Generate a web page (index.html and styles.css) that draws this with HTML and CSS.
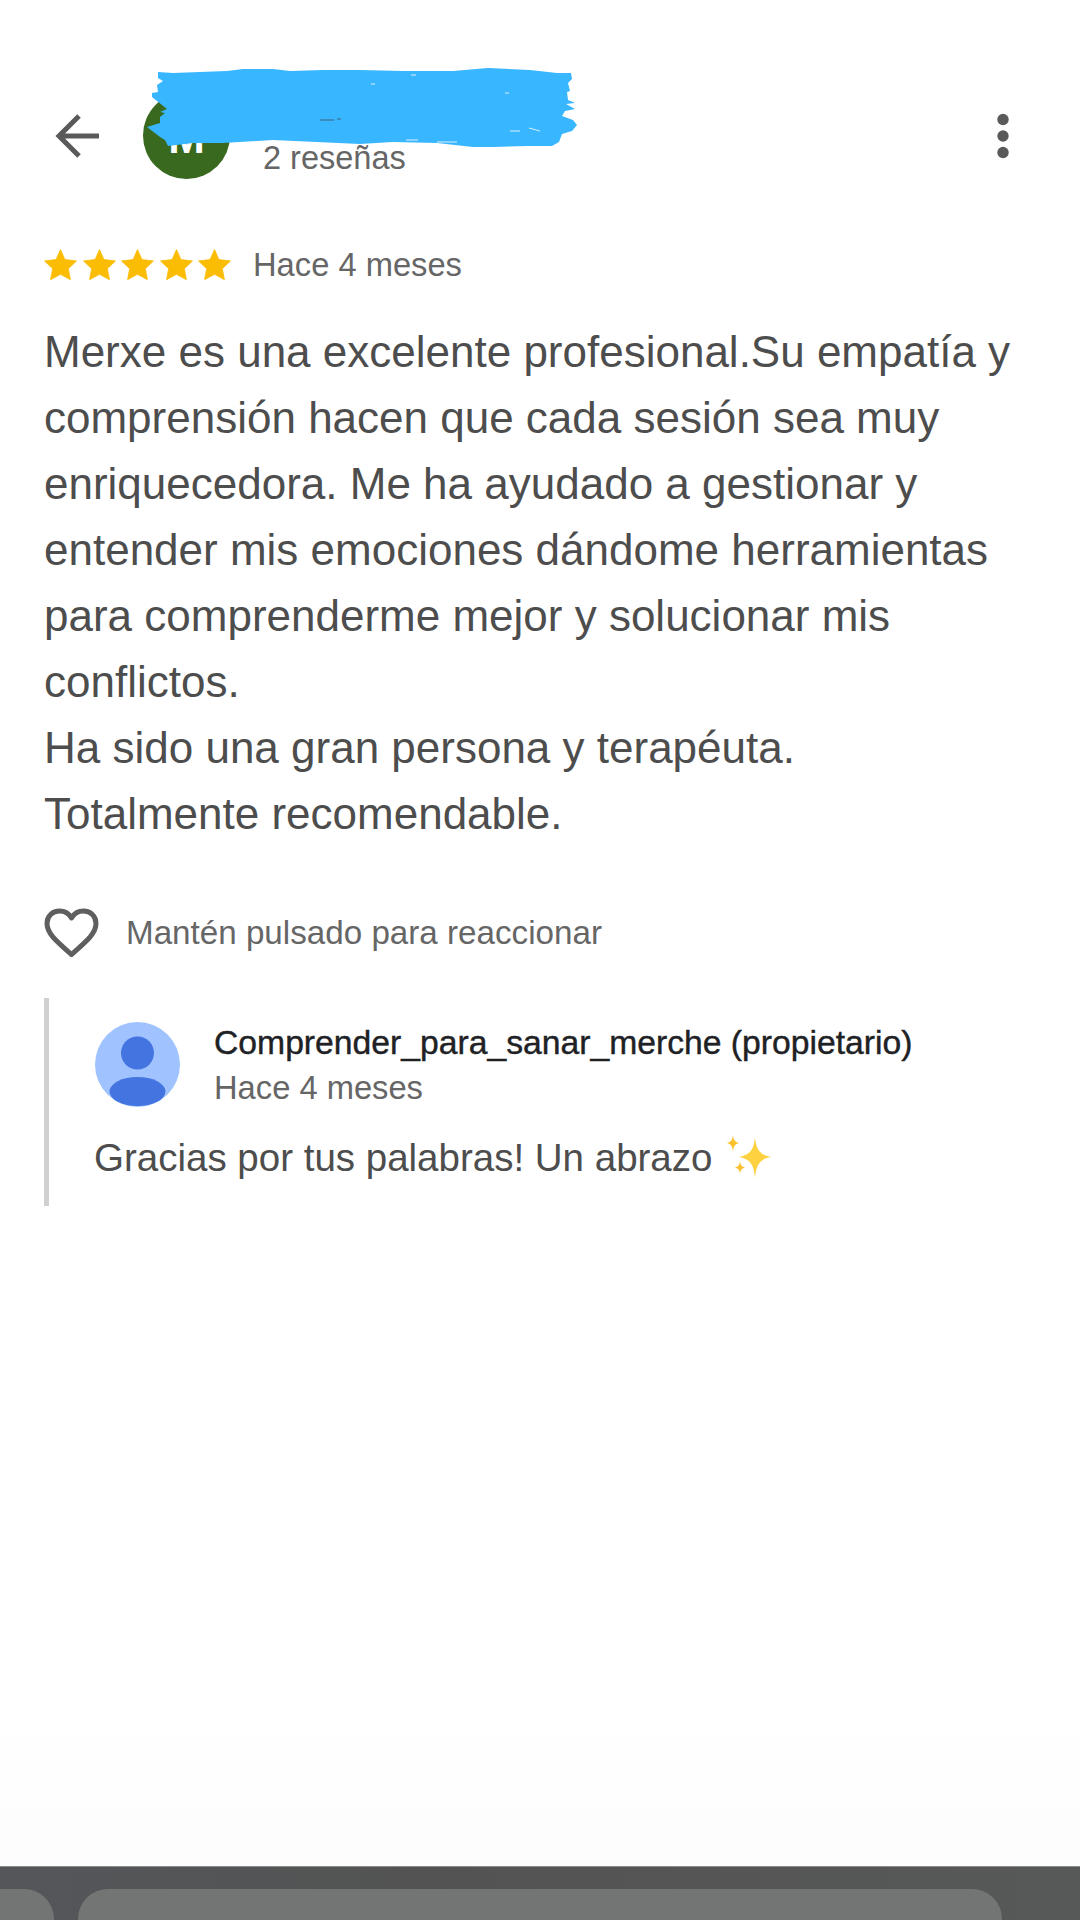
FILE: index.html
```html
<!DOCTYPE html>
<html lang="es">
<head>
  <meta charset="UTF-8" />
  <title>Reseña</title>
  <meta name="viewport" content="width=device-width, initial-scale=1.0" />
  <link rel="stylesheet" href="styles.css">
</head>
<body>
  <svg class="defs" width="0" height="0">
    <symbol id="star" viewBox="0 0 24 24">
      <path d="M12 .4L15.200 7.700 23.600 8.700 17.700 14.300 19.200 22.300 12 18.400 4.800 22.300 6.300 14.300 .4 8.700 8.800 7.700z" fill="#fbbc04" stroke="#fbbc04" stroke-width=".6" stroke-linejoin="round" />
    </symbol>
  </svg>

  <main class="page">
    <header class="topbar">
      <svg class="back" viewBox="0 0 44 44" width="44" height="44">
        <path d="M44 22H4M24 2L4 22l20 20" fill="none" stroke="#5a5a5a" stroke-width="5" />
      </svg>
      <div class="avatar">M</div>
      <div class="author">
        <div class="author-name">&nbsp;</div>
        <div class="author-count">2 reseñas</div>
      </div>
      <svg class="more" viewBox="0 0 14 46" width="14" height="46">
        <circle cx="7" cy="6.500" r="5.700" fill="#5a5a5a" />
        <circle cx="7" cy="23" r="5.700" fill="#5a5a5a" />
        <circle cx="7" cy="39.500" r="5.700" fill="#5a5a5a" />
      </svg>
      <!-- scribble over the name -->
      <svg class="scribble" viewBox="0 0 435 85" width="435" height="85">
        <polygon fill="#38b6ff" points="13,7 28,8 55,7 82,6 98,4 128,4 145,6 178,5 215,5 258,6 308,6 343,3 385,5 412,8 426,8 427,14 423,18 425,26 422,27 423,35 430,38 421,39 430,44 420,46 417,51 428,55 432,60 427,66 417,69 414,77 407,81 382,81 348,82 328,82 292,78 248,77 215,79 128,75 78,78 48,78 23,81 20,75 15,72 2,62 15,58 15,52 20,48 15,47 22,44 17,40 12,36 7,32 7,28 13,27 12,20 18,16 13,13" />
        <path d="M384 63l11 3M365 66h10M292 77h20M261 75h12M360 28h4M226 19h4M266 10h5" stroke="#d8f0ff" stroke-width="1" fill="none" />
        <path d="M175 55h14M192 54h4" stroke="#3a7fa8" stroke-width="1.500" fill="none" />
      </svg>
    </header>

    <section class="review">
      <div class="rating">
        <div class="stars">
          <svg width="33" height="33"><use href="#star" /></svg>
          <svg width="33" height="33"><use href="#star" /></svg>
          <svg width="33" height="33"><use href="#star" /></svg>
          <svg width="33" height="33"><use href="#star" /></svg>
          <svg width="33" height="33"><use href="#star" /></svg>
        </div>
        <span class="meta">Hace 4 meses</span>
      </div>

      <p class="review-text">Merxe es una excelente profesional.Su empatía y comprensión hacen que cada sesión sea muy enriquecedora. Me ha ayudado a gestionar y entender mis emociones dándome herramientas para comprenderme mejor y solucionar mis conflictos.<br>Ha sido una gran persona y terapéuta.<br>Totalmente recomendable.</p>

      <div class="react">
        <svg viewBox="0 0 55 50" width="55" height="50">
          <path d="M27.500 46.500C11 32 3 25 3 15.500 3 8 8.500 3 15.500 3c5 0 9.500 2.500 12 7 2.500-4.500 7-7 12-7C46.500 3 52 8 52 15.500 52 25 44 32 27.500 46.500z" fill="none" stroke="#5f5f5f" stroke-width="5" stroke-linejoin="round" />
        </svg>
        <span class="meta react-label">Mantén pulsado para reaccionar</span>
      </div>

      <div class="reply">
        <div class="reply-head">
          <svg class="reply-avatar" viewBox="0 0 85 85" width="85" height="85">
            <circle cx="42.500" cy="42.500" r="42.500" fill="#a0c3ff" />
            <circle cx="42.500" cy="31" r="16.500" fill="#4374e0" />
            <ellipse cx="42.500" cy="69.500" rx="28" ry="14.500" fill="#4374e0" />
          </svg>
          <div>
            <div class="reply-name">Comprender_para_sanar_merche (propietario)</div>
            <div class="meta">Hace 4 meses</div>
          </div>
        </div>
        <p class="reply-text">Gracias por tus palabras! Un abrazo
          <svg class="sparkles" viewBox="0 0 44 44" width="44" height="44">
            <path d="M28 2c1 11 4 18 16 20-12 2-15 9-16 21-1-12-4-19-16-21 12-2 15-9 16-20z" fill="#fdd13f" />
            <path d="M6 0c.6 5 2 7 6 8-4 1-5.400 3-6 9-.6-6-2-8-6-9 4-1 5.400-3 6-8z" fill="#fcc22d" />
            <path d="M13 26c.5 4 1.500 5.500 5 6.500-3.500 1-4.500 2.500-5 6.500-.5-4-1.500-5.500-5-6.500 3.500-1 4.500-2.500 5-6.500z" fill="#fcc22d" />
          </svg>
        </p>
      </div>
    </section>

    <footer class="bottombar">
      <div class="tab tab-side"></div>
      <div class="tab tab-main"></div>
    </footer>
  </main>
</body>
</html>
```

FILE: styles.css
```css
* {
  box-sizing: border-box;
}

body {
  margin: 0;
  background: #fff;
  font-family: "Liberation Sans", Arial, sans-serif;
  color: #4d4d4d;
}

.defs {
  display: block;
}

.page {
  display: flex;
  flex-direction: column;
  height: 1920px;
  overflow: hidden;
  background: linear-gradient(#fff 1700px, #fcfcfc);
}

.topbar {
  position: relative;
  display: flex;
  align-items: center;
  height: 87px;
  margin-top: 92px;
  padding: 0 70px 0 55px;
}

.back {
  flex-shrink: 0;
}

.avatar {
  display: flex;
  align-items: center;
  justify-content: center;
  flex-shrink: 0;
  width: 87px;
  height: 87px;
  margin-left: 44px;
  padding-top: 4px;
  border-radius: 50%;
  background: #38691e;
  color: #fff;
  font-size: 44px;
  font-weight: bold;
}

.author {
  flex: 1;
  margin-left: 33px;
}

.author-name {
  height: 45px;
}

.author-count {
  font-size: 32.500px;
  color: #666;
}

.scribble {
  position: absolute;
  left: 145px;
  top: -27px;
}

.review {
  padding: 0 44px;
}

.rating {
  display: flex;
  align-items: center;
  margin-top: 67px;
}

.stars {
  display: flex;
  gap: 5.500px;
}

.meta {
  font-size: 32.700px;
  color: #666;
}

.rating .meta {
  margin-left: 22px;
}

.review-text {
  margin: 35px 0 0;
  font-size: 44px;
  line-height: 66px;
}

.react {
  display: flex;
  align-items: center;
  gap: 27px;
  margin-top: 61px;
}

.react-label {
  font-size: 33.200px;
}

.reply {
  margin-top: 40px;
  padding: 24px 0 23px 45px;
  border-left: 5px solid #d0d0d0;
}

.reply-head {
  display: flex;
  align-items: center;
  gap: 34px;
  margin-left: 1px;
}

.reply-avatar {
  flex-shrink: 0;
}

.reply-name {
  margin-bottom: 7px;
  font-size: 33.700px;
  font-weight: 500;
  color: #202124;
  -webkit-text-stroke: 0.4px #202124;
}

.reply-text {
  margin: 26px 0 0;
  font-size: 38.500px;
  line-height: 50px;
}

.sparkles {
  vertical-align: -8px;
  margin-left: 4px;
}

.bottombar {
  display: flex;
  gap: 24px;
  margin-top: auto;
  height: 54px;
  padding-top: 22px;
  border-top: 1px solid #8a8a8a;
  background: linear-gradient(90deg, #55565a, #525352 40%, #575958);
}

.tab {
  height: 60px;
  background: #737574;
}

.tab-side {
  width: 54px;
  border-radius: 0 30px 0 0;
}

.tab-main {
  width: 924px;
  border-radius: 30px 30px 0 0;
}
```
